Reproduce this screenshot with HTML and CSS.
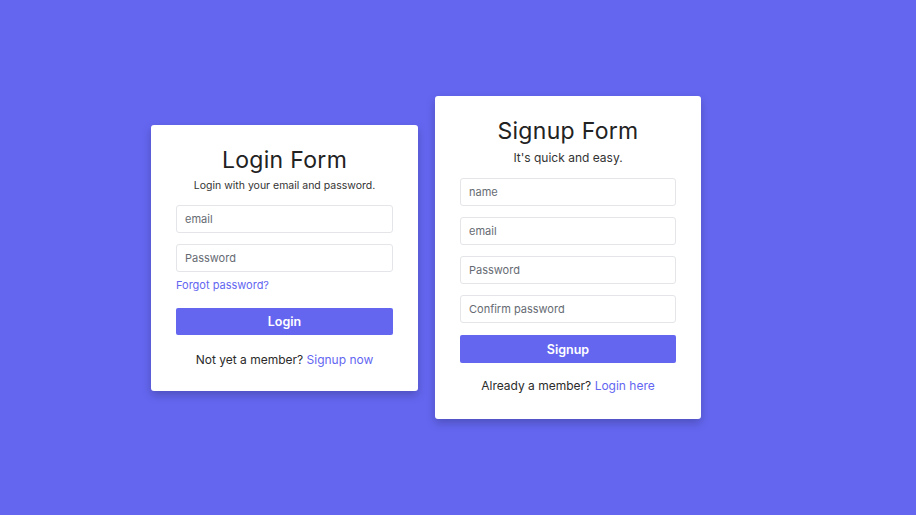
FILE: index.html
```html
<!DOCTYPE html>
<html lang="en">
<head>
<meta charset="utf-8">
<title>Login and Signup</title>
<link rel="stylesheet" href="styles.css">
</head>
<body>
<main class="page">
  <form class="card card-login">
    <h2 class="title">Login Form</h2>
    <p class="subtitle subtitle-login">Login with your email and password.</p>
    <input class="field" type="text" placeholder="email">
    <input class="field" type="password" placeholder="Password">
    <a class="forgot" href="#">Forgot password?</a>
    <button class="btn" type="button">Login</button>
    <p class="footer">Not yet a member? <a href="#">Signup now</a></p>
  </form>
  <form class="card card-signup">
    <h2 class="title">Signup Form</h2>
    <p class="subtitle">It's quick and easy.</p>
    <input class="field" type="text" placeholder="name">
    <input class="field" type="text" placeholder="email">
    <input class="field" type="password" placeholder="Password">
    <input class="field" type="password" placeholder="Confirm password">
    <button class="btn" type="button">Signup</button>
    <p class="footer">Already a member? <a href="#">Login here</a></p>
  </form>
</main>
</body>
</html>
```

FILE: styles.css
```css
* { box-sizing: border-box; }
html, body { margin: 0; padding: 0; }
body {
  background: #6466f0;
  font-family: Inter, "Open Sans", sans-serif;
  color: #2b2b2b;
}
.page {
  min-height: 100vh;
  display: flex;
  align-items: center;
  justify-content: center;
  gap: 17px;
  padding-right: 64px;
}
.card {
  background: #fff;
  border-radius: 3px;
  box-shadow: 0 4px 10px rgba(0, 0, 0, 0.22);
  display: flex;
  flex-direction: column;
  padding: 20px 25px 22px;
}
.card-login { width: 267px; }
.card-signup { width: 266px; padding-bottom: 24px; }
.title {
  margin: 0;
  font-size: 23px;
  line-height: 30px;
  font-weight: 400;
  text-align: center;
  color: #222;
  letter-spacing: 0.3px;
}
.subtitle {
  margin: 4px 0 12px;
  font-size: 12px;
  line-height: 16px;
  text-align: center;
  color: #333;
}
.subtitle-login {
  margin: 3px 0 11px;
  font-size: 10.5px;
}
.field {
  display: block;
  width: 100%;
  height: 28px;
  margin: 0 0 11px;
  padding: 0 8px;
  border: 1px solid #e3e5e8;
  border-radius: 3px;
  font-family: inherit;
  font-size: 11px;
  color: #333;
  background: #fff;
}
.field::placeholder { color: #666b73; }
.card-signup .field:last-of-type { margin-bottom: 12px; }
.forgot {
  margin: -6px 0 15px;
  font-size: 11px;
  line-height: 16px;
  color: #6366f1;
  text-decoration: none;
}
.btn {
  height: 27px;
  border: 0;
  border-radius: 2px;
  background: #6466f0;
  color: #fff;
  font-family: inherit;
  font-size: 12.5px;
  font-weight: 600;
}
.card-signup .btn { height: 28px; }
.footer {
  margin: 16px 0 0;
  font-size: 12px;
  line-height: 18px;
  text-align: center;
  color: #2b2b2b;
}
.card-signup .footer { margin-top: 14px; }
.footer a { color: #6366f1; text-decoration: none; }
```
